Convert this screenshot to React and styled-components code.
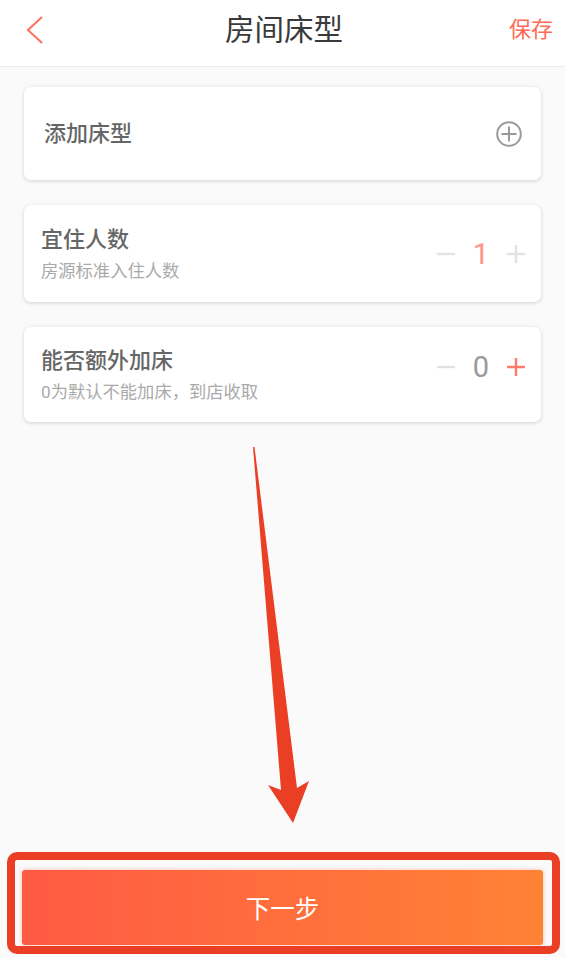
import React from "react";
import styled, { createGlobalStyle } from "styled-components";

const GlobalStyle = createGlobalStyle`
  html, body {
    margin: 0;
    padding: 0;
    background: #fafafa;
    font-family: Roboto, "Noto Sans CJK SC", sans-serif;
  }
  * {
    box-sizing: border-box;
  }
`;

const Page = styled.div`
  position: relative;
  display: flex;
  flex-direction: column;
  width: 565px;
  height: 958px;
  overflow: hidden;
  background: #fafafa;
`;

const Header = styled.header`
  display: flex;
  align-items: center;
  justify-content: space-between;
  height: 67px;
  padding: 0 12px 7px 26px;
  background: #fff;
  border-bottom: 1px solid #ececec;
`;

const BackButton = styled.button`
  display: flex;
  width: 33px;
  padding: 0;
  border: 0;
  background: none;
`;

const Title = styled.h1`
  margin: 0;
  font-size: 29.5px;
  font-weight: 400;
  line-height: 40px;
  color: #3a3a3a;
`;

const SaveLink = styled.span`
  font-size: 22px;
  line-height: 30px;
  color: #ff6a56;
`;

const Content = styled.main`
  display: flex;
  flex: 1;
  flex-direction: column;
  padding: 20px 24px 0;
`;

const Card = styled.section`
  display: flex;
  align-items: center;
  justify-content: space-between;
  height: ${(p) => p.$height}px;
  margin-bottom: ${(p) => p.$gap}px;
  padding: 0 ${(p) => p.$right}px 0 ${(p) => p.$left}px;
  background: #fff;
  border-radius: 7px;
  box-shadow: 0 1px 4px rgba(0, 0, 0, 0.16);
`;

const AddLabel = styled.span`
  font-size: 22px;
  font-weight: 500;
  line-height: 30px;
  color: #666;
`;

const CardText = styled.div`
  display: flex;
  flex-direction: column;
  padding-top: 1px;
`;

const CardTitle = styled.span`
  font-size: 22px;
  font-weight: 500;
  line-height: 30px;
  color: #666;
`;

const CardHint = styled.span`
  margin-top: 4px;
  font-size: 17.3px;
  line-height: 24px;
  color: #aaa;
`;

const Stepper = styled.div`
  display: flex;
  align-items: center;
  margin-bottom: ${(p) => p.$lift}px;
`;

const StepIcon = styled.svg`
  display: block;
  width: 18px;
  height: 18px;
  stroke: ${(p) => (p.$active ? "#ff7b6b" : "#e2e2e2")};
  stroke-width: 2.4;
`;

const StepValue = styled.span`
  width: 52px;
  font-size: 29px;
  line-height: 34px;
  text-align: center;
  color: ${(p) => (p.$accent ? "#ff9384" : "#999")};
`;

const Footer = styled.footer`
  padding: 0 22px 13px;
`;

const NextButton = styled.button`
  display: block;
  width: 100%;
  height: 75px;
  padding: 0;
  border: 0;
  border-radius: 3px;
  background: linear-gradient(90deg, #ff5a44, #ff8235);
  box-shadow: 0 0 4px rgba(255, 110, 70, 0.45);
  font-family: inherit;
  font-size: 24.5px;
  color: #fff;
`;

const Highlight = styled.div`
  position: absolute;
  left: 7px;
  top: 852px;
  width: 553px;
  height: 102px;
  border: 8px solid #ea3f25;
  border-radius: 10px;
  pointer-events: none;
`;

const ArrowMark = styled.svg`
  position: absolute;
  left: 0;
  top: 0;
  pointer-events: none;
`;

const Stepper1 = ({ value, accent, lift, active }) => (
  <Stepper $lift={lift}>
    <StepIcon viewBox="0 0 18 18">
      <path d="M0 9h18" />
    </StepIcon>
    <StepValue $accent={accent}>{value}</StepValue>
    <StepIcon viewBox="0 0 18 18" $active={active}>
      <path d="M0 9h18M9 0v18" />
    </StepIcon>
  </Stepper>
);

export default function App() {
  return (
    <Page>
      <GlobalStyle />
      <Header>
        <BackButton aria-label="返回">
          <svg width="18" height="30" viewBox="0 0 18 30" fill="none">
            <path d="M16 2 2 15l14 13" stroke="#ff6f5c" strokeWidth="2" />
          </svg>
        </BackButton>
        <Title>房间床型</Title>
        <SaveLink>保存</SaveLink>
      </Header>

      <Content>
        <Card $height={93} $gap={25} $left={20} $right={19}>
          <AddLabel>添加床型</AddLabel>
          <svg width="26" height="26" viewBox="0 0 26 26" fill="none" stroke="#999" strokeWidth="2">
            <circle cx="13" cy="13" r="11.8" />
            <path d="M5.5 13h15M13 5.5v15" />
          </svg>
        </Card>

        <Card $height={97} $gap={25} $left={17} $right={16}>
          <CardText>
            <CardTitle>宜住人数</CardTitle>
            <CardHint>房源标准入住人数</CardHint>
          </CardText>
          <Stepper1 value="1" accent lift={0} />
        </Card>

        <Card $height={95} $gap={0} $left={17} $right={16}>
          <CardText>
            <CardTitle>能否额外加床</CardTitle>
            <CardHint>0为默认不能加床，到店收取</CardHint>
          </CardText>
          <Stepper1 value="0" lift={15} active />
        </Card>
      </Content>

      <Footer>
        <NextButton>下一步</NextButton>
      </Footer>

      <Highlight />
      <ArrowMark width="565" height="958" viewBox="0 0 565 958">
        <path d="M253 447 254.500 447 297 788 309 781 293 823 268 785 281 790Z" fill="#ea3f25" />
      </ArrowMark>
    </Page>
  );
}
